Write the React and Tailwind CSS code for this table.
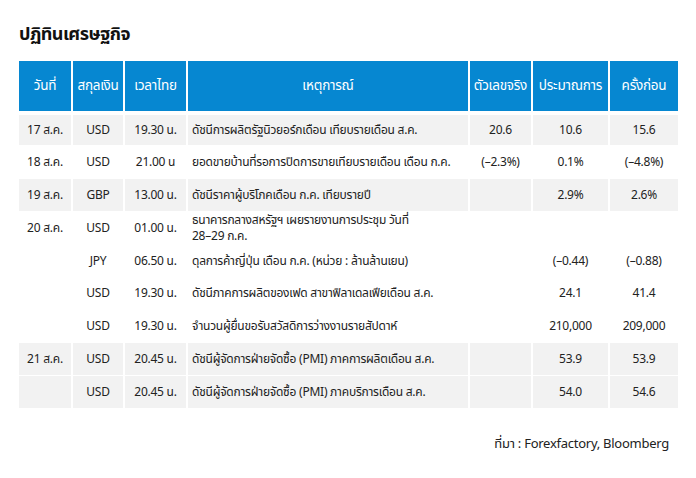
const rows = [
  { date: '17 ส.ค.', cur: 'USD', time: '19.30 น.', event: 'ดัชนีการผลิตรัฐนิวยอร์กเดือน เทียบรายเดือน ส.ค.', actual: '20.6', forecast: '10.6', prev: '15.6', gray: true },
  { date: '18 ส.ค.', cur: 'USD', time: '21.00 น', event: 'ยอดขายบ้านที่รอการปิดการขายเทียบรายเดือน เดือน ก.ค.', actual: '(–2.3%)', forecast: '0.1%', prev: '(–4.8%)' },
  { date: '19 ส.ค.', cur: 'GBP', time: '13.00 น.', event: 'ดัชนีราคาผู้บริโภคเดือน ก.ค. เทียบรายปี', actual: '', forecast: '2.9%', prev: '2.6%', gray: true },
  { date: '20 ส.ค.', cur: 'USD', time: '01.00 น.', event: 'ธนาคารกลางสหรัฐฯ เผยรายงานการประชุม วันที่\n28–29 ก.ค.', actual: '', forecast: '', prev: '' },
  { date: '', cur: 'JPY', time: '06.50 น.', event: 'ดุลการค้าญี่ปุ่น เดือน ก.ค. (หน่วย : ล้านล้านเยน)', actual: '', forecast: '(–0.44)', prev: '(–0.88)' },
  { date: '', cur: 'USD', time: '19.30 น.', event: 'ดัชนีภาคการผลิตของเฟด สาขาฟิลาเดลเฟียเดือน ส.ค.', actual: '', forecast: '24.1', prev: '41.4' },
  { date: '', cur: 'USD', time: '19.30 น.', event: 'จำนวนผู้ยื่นขอรับสวัสดิการว่างงานรายสัปดาห์', actual: '', forecast: '210,000', prev: '209,000' },
  { date: '21 ส.ค.', cur: 'USD', time: '20.45 น.', event: 'ดัชนีผู้จัดการฝ่ายจัดซื้อ (PMI) ภาคการผลิตเดือน ส.ค.', actual: '', forecast: '53.9', prev: '53.9', gray: true },
  { date: '', cur: 'USD', time: '20.45 น.', event: 'ดัชนีผู้จัดการฝ่ายจัดซื้อ (PMI) ภาคบริการเดือน ส.ค.', actual: '', forecast: '54.0', prev: '54.6', gray: true },
];

const headers = ['วันที่', 'สกุลเงิน', 'เวลาไทย', 'เหตุการณ์', 'ตัวเลขจริง', 'ประมาณการ', 'ครั้งก่อน'];

export default function App() {
  return (
    <div className="w-[696px] h-[478px] bg-white px-[19px] pt-[22px] text-[#222] font-['Noto_Sans_Thai','Noto_Sans',sans-serif]">
      <h1 className="text-[18px] font-bold leading-[26px] tracking-[-0.03em] text-[#111]">ปฏิทินเศรษฐกิจ</h1>

      <table className="mt-[13px] w-[659px] table-fixed border-collapse text-[12px] tracking-[-0.02em]">
        <colgroup>
          <col className="w-[53px]" />
          <col className="w-[52px]" />
          <col className="w-[63px]" />
          <col className="w-[282px]" />
          <col className="w-[63px]" />
          <col className="w-[77px]" />
          <col className="w-[69px]" />
        </colgroup>
        <thead>
          <tr className="border-b-4 border-white">
            {headers.map((h) => (
              <th
                key={h}
                className="h-[52px] bg-[#0687d1] text-[13.5px] font-normal text-white whitespace-nowrap border-r-2 border-white last:border-r-0"
              >
                {h}
              </th>
            ))}
          </tr>
        </thead>
        <tbody>
          {rows.map((r, i) => (
            <tr key={i} className={`h-[32.75px] border-t border-white ${r.gray ? 'bg-[#f2f2f2]' : 'bg-white'}`}>
              <td className="text-center border-r-2 border-white">{r.date}</td>
              <td className="text-center border-r-2 border-white">{r.cur}</td>
              <td className="text-center border-r-2 border-white">{r.time}</td>
              <td className="pl-1 leading-4 whitespace-pre-line border-r-2 border-white">{r.event}</td>
              <td className="text-center border-r-2 border-white">{r.actual}</td>
              <td className="text-center border-r-2 border-white">{r.forecast}</td>
              <td className="text-center">{r.prev}</td>
            </tr>
          ))}
        </tbody>
      </table>

      <p className="mt-[27px] pr-[8px] text-right text-[13px] tracking-[-0.02em]">ที่มา : Forexfactory, Bloomberg</p>
    </div>
  );
}
